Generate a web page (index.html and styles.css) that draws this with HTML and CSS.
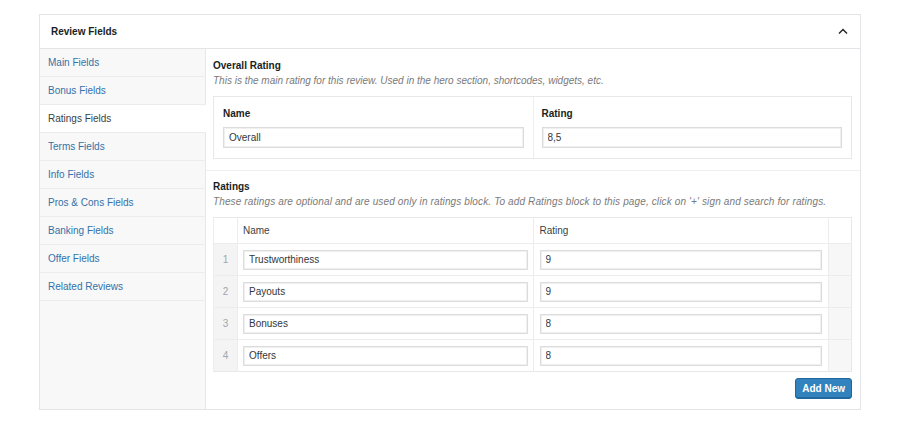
FILE: index.html
```html
<!DOCTYPE html>
<html>
<head>
<meta charset="utf-8">
<link rel="stylesheet" href="styles.css">
</head>
<body>
<div class="box">
  <div class="box-head">
    <span class="box-title">Review Fields</span>
    <svg class="chev" width="10" height="7" viewBox="0 0 10 7"><path d="M1 5.5 L5 1.5 L9 5.5" fill="none" stroke="#23282d" stroke-width="1.5"/></svg>
  </div>
  <div class="box-body">
    <ul class="tabs">
      <li class="tab"><a>Main Fields</a></li>
      <li class="tab"><a>Bonus Fields</a></li>
      <li class="tab active"><a>Ratings Fields</a></li>
      <li class="tab"><a>Terms Fields</a></li>
      <li class="tab"><a>Info Fields</a></li>
      <li class="tab"><a>Pros &amp; Cons Fields</a></li>
      <li class="tab"><a>Banking Fields</a></li>
      <li class="tab"><a>Offer Fields</a></li>
      <li class="tab"><a>Related Reviews</a></li>
    </ul>
    <div class="panel">
      <div class="section first">
        <div class="sec-title">Overall Rating</div>
        <div class="sec-desc">This is the main rating for this review. Used in the hero section, shortcodes, widgets, etc.</div>
        <div class="group">
          <div class="group-col">
            <div class="label">Name</div>
            <input class="inp" type="text" value="Overall">
          </div>
          <div class="group-col">
            <div class="label">Rating</div>
            <input class="inp" type="text" value="8,5">
          </div>
        </div>
      </div>
      <div class="section second">
        <div class="sec-title">Ratings</div>
        <div class="sec-desc wide">These ratings are optional and are used only in ratings block. To add Ratings block to this page, click on '+' sign and search for ratings.</div>
        <table class="rep">
          <thead>
            <tr><th class="num"></th><th>Name</th><th>Rating</th><th class="act"></th></tr>
          </thead>
          <tbody>
            <tr><td class="num">1</td><td><input class="inp" type="text" value="Trustworthiness"></td><td><input class="inp" type="text" value="9"></td><td class="act"></td></tr>
            <tr><td class="num">2</td><td><input class="inp" type="text" value="Payouts"></td><td><input class="inp" type="text" value="9"></td><td class="act"></td></tr>
            <tr><td class="num">3</td><td><input class="inp" type="text" value="Bonuses"></td><td><input class="inp" type="text" value="8"></td><td class="act"></td></tr>
            <tr><td class="num">4</td><td><input class="inp" type="text" value="Offers"></td><td><input class="inp" type="text" value="8"></td><td class="act"></td></tr>
          </tbody>
        </table>
        <div class="actions"><button class="btn">Add New</button></div>
      </div>
    </div>
  </div>
</div>
</body>
</html>
```
FILE: styles.css
```css
* { box-sizing: border-box; }
html, body { margin: 0; padding: 0; background: #fff; }
body {
  padding: 14px 39px;
  font-family: "Liberation Sans", Arial, sans-serif;
  font-size: 10px;
  color: #32373c;
}
.box {
  width: 822px;
  border: 1px solid #e2e4e7;
  background: #fff;
}
.box-head {
  height: 34px;
  border-bottom: 1px solid #e2e4e7;
  display: flex;
  align-items: center;
  justify-content: space-between;
  padding: 0 12px 0 11px;
}
.box-title { font-weight: bold; font-size: 10px; color: #191e23; }
.chev { display: block; }
.box-body { display: flex; }
.tabs {
  list-style: none;
  margin: 0;
  padding: 0;
  width: 166px;
  flex: none;
  background: #f8f8f8;
  border-right: 1px solid #e8e8e8;
}
.tab {
  height: 28px;
  border-bottom: 1px solid #ececec;
  display: flex;
  align-items: center;
  padding-left: 8px;
  margin-right: -1px;
}
.tab a { color: #3471a8; }
.tab.active { background: #fff; }
.tab.active a { color: #3a3f44; }
.panel { flex: 1; min-width: 0; }
.section { padding: 0 8px 0 7px; }
.section.first { padding-top: 10px; padding-bottom: 11px; border-bottom: 1px solid #f0f0f0; }
.section.second { padding-top: 9px; padding-bottom: 10px; }
.sec-title { font-weight: bold; color: #191e23; line-height: 14px; }
.sec-desc { font-style: italic; color: #7a7a7a; line-height: 14px; margin-top: 1px; }
.sec-desc.wide { letter-spacing: 0.13px; }
.group {
  margin-top: 8px;
  border: 1px solid #e8e8e8;
  display: flex;
}
.group-col { flex: 1; padding: 10px 9px 10px 9px; }
.group-col + .group-col { border-left: 1px solid #eeeeee; padding-left: 8px; }
.label { font-weight: bold; color: #191e23; line-height: 14px; margin-bottom: 6px; }
.inp {
  display: block;
  width: 100%;
  height: 21px;
  border: 1px solid #dcdcdc;
  box-shadow: inset 0 0 0 1px #f0f0f0;
  padding: 0 5px;
  font-family: "Liberation Sans", Arial, sans-serif;
  font-size: 10px;
  color: #32373c;
  background: #fff;
  outline: none;
}
.rep {
  margin-top: 8px;
  width: 100%;
  border-collapse: collapse;
  border: 1px solid #e8e8e8;
  table-layout: fixed;
}
.rep th {
  height: 26px;
  font-weight: normal;
  text-align: left;
  color: #3a3f44;
  padding: 0 5px;
  border-bottom: 1px solid #ececec;
  border-left: 1px solid #ececec;
}
.rep td {
  height: 32px;
  padding: 0 5px;
  border-top: 1px solid #ececec;
  border-left: 1px solid #ececec;
}
.rep th:nth-child(3), .rep td:nth-child(3) { padding-left: 6px; padding-right: 6px; }
.rep .num { width: 24px; padding: 0; text-align: center; color: #a0a5aa; }
.rep td.num { background: #f4f4f4; }
.rep .act { width: 23px; padding: 0; }
.rep td.act { background: #f7f7f7; }
.rep td .inp { height: 20px; }
.actions { display: flex; justify-content: flex-end; margin-top: 6px; }
.btn {
  height: 21px;
  padding: 0 6px;
  background: #3182bd;
  border: 1px solid #20679b;
  border-radius: 3px;
  color: #fff;
  font-family: "Liberation Sans", Arial, sans-serif;
  font-size: 10px;
  font-weight: bold;
  box-shadow: inset 0 -1px 0 #1f6a9e;
}
```
